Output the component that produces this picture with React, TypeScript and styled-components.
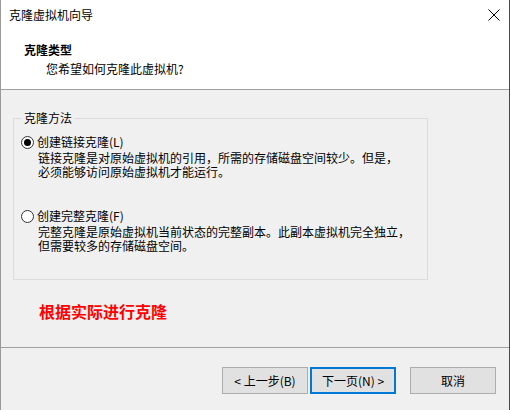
import styled, { createGlobalStyle } from 'styled-components';

const GlobalStyle = createGlobalStyle`
	html, body {
		margin: 0;
		padding: 0;
		background: #ffffff;
	}
	* {
		box-sizing: border-box;
	}
`;

const App = () => {
	return (
		<>
			<GlobalStyle />
			<Window>
				<TitleBar>
					<TitleText>克隆虚拟机向导</TitleText>
					<CloseButton aria-label='关闭'>
						<svg width='12' height='12' viewBox='0 0 12 12'>
							<path d='M0.5 0.5 L11.5 11.5 M11.5 0.5 L0.5 11.5' stroke='#000' strokeWidth='1' fill='none' />
						</svg>
					</CloseButton>
				</TitleBar>
				<Header>
					<HeaderTitle>克隆类型</HeaderTitle>
					<HeaderSub>您希望如何克隆此虚拟机?</HeaderSub>
				</Header>
				<Divider />
				<Body>
					<GroupBox>
						<Legend>克隆方法</Legend>
						<Option>
							<RadioRow>
								<Radio $checked />
								<span>创建链接克隆(L)</span>
							</RadioRow>
							<Desc>
								链接克隆是对原始虚拟机的引用，所需的存储磁盘空间较少。但是，
								<br />
								必须能够访问原始虚拟机才能运行。
							</Desc>
						</Option>
						<Option $gap={29}>
							<RadioRow>
								<Radio />
								<span>创建完整克隆(F)</span>
							</RadioRow>
							<Desc>
								完整克隆是原始虚拟机当前状态的完整副本。此副本虚拟机完全独立，
								<br />
								但需要较多的存储磁盘空间。
							</Desc>
						</Option>
					</GroupBox>
					<Note>根据实际进行克隆</Note>
					<Footer>
						<Divider />
						<ButtonRow>
							<Button>&lt; 上一步(B)</Button>
							<Button $primary>下一页(N) &gt;</Button>
							<Button $space={14}>取消</Button>
						</ButtonRow>
					</Footer>
				</Body>
			</Window>
		</>
	);
};

const Window = styled.div`
	width: 510px;
	height: 410px;
	display: flex;
	flex-direction: column;
	border-left: 1px solid #9a9a9a;
	border-right: 1px solid #4a4a4a;
	font-family: 'Noto Sans CJK SC', 'Noto Sans', sans-serif;
	font-size: 12px;
	color: #000;
	overflow: hidden;
`;

const TitleBar = styled.div`
	height: 31px;
	display: flex;
	align-items: center;
	justify-content: space-between;
	padding: 0 9px 0 8px;
	background: #ffffff;
`;

const TitleText = styled.span`
	line-height: 14px;
	padding-bottom: 1px;
`;

const CloseButton = styled.div`
	width: 12px;
	height: 12px;
	display: flex;
	margin-bottom: 2px;
`;

const Header = styled.div`
	height: 58px;
	background: #ffffff;
	padding: 12px 0 0 23px;
`;

const HeaderTitle = styled.div`
	font-weight: bold;
	line-height: 14px;
`;

const HeaderSub = styled.div`
	line-height: 14px;
	margin: 5px 0 0 22px;
`;

const Divider = styled.div`
	height: 1px;
	background: #a0a0a0;
	flex-shrink: 0;
`;

const Body = styled.div`
	flex: 1;
	display: flex;
	flex-direction: column;
	background: #f0f0f0;
`;

const GroupBox = styled.fieldset`
	margin: 21px 0 0 12px;
	width: 415px;
	padding: 0 7px 26px 7px;
	border: 1px solid #dcdcdc;
	min-width: 0;
`;

const Legend = styled.legend`
	margin-left: 1px;
	padding: 0 2px;
	line-height: 14px;
`;

const Option = styled.div<{ $gap?: number }>`
	margin-top: ${(p) => p.$gap ?? 9}px;
`;

const RadioRow = styled.div`
	display: flex;
	align-items: center;
	gap: 3px;
	height: 16px;
	line-height: 14px;
`;

const Radio = styled.span<{ $checked?: boolean }>`
	width: 13px;
	height: 13px;
	border-radius: 50%;
	border: 1px solid #333333;
	background: #ffffff;
	display: flex;
	align-items: center;
	justify-content: center;
	flex-shrink: 0;
	&::after {
		content: '';
		width: 7px;
		height: 7px;
		border-radius: 50%;
		background: ${(p) => (p.$checked ? '#000000' : 'transparent')};
	}
`;

const Desc = styled.div`
	margin: 1px 0 0 17px;
	line-height: 14px;
`;

const Note = styled.div`
	margin: 21px 0 0 38px;
	color: #ff0000;
	font-weight: bold;
	font-size: 16px;
	line-height: 20px;
`;

const Footer = styled.div`
	margin-top: auto;
	padding-bottom: 16px;
`;

const ButtonRow = styled.div`
	display: flex;
	justify-content: flex-end;
	padding: 19px 13px 0 0;
`;

const Button = styled.button<{ $primary?: boolean; $space?: number }>`
	width: 86px;
	height: 27px;
	margin-left: ${(p) => p.$space ?? 2}px;
	font-family: inherit;
	font-size: 12px;
	color: #000;
	background: #e1e1e1;
	border: ${(p) => (p.$primary ? '2px solid #0078d7' : '1px solid #adadad')};
	padding: 0;
	&:first-child {
		margin-left: 0;
	}
`;

export default App;
